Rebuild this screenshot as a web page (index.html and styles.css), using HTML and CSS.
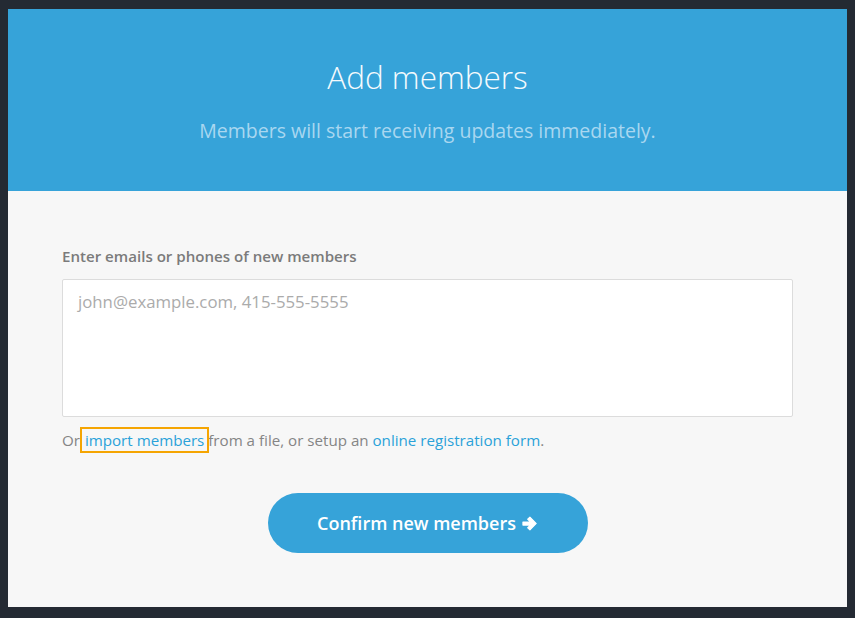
FILE: index.html
```html
<!DOCTYPE html>
<html lang="en">
<head>
<meta charset="utf-8">
<title>Add members</title>
<link rel="stylesheet" href="styles.css">
</head>
<body>
<div class="modal">
  <div class="modal-header">
    <h1 class="title">Add members</h1>
    <p class="subtitle">Members will start receiving updates immediately.</p>
  </div>
  <div class="modal-body">
    <label class="label" for="members">Enter emails or phones of new members</label>
    <textarea id="members" class="input" placeholder="john@example.com, 415-555-5555"></textarea>
    <p class="help">Or <a class="link highlighted" href="#">import members</a> from a file, or setup an <a class="link" href="#">online registration form</a>.</p>
    <div class="actions">
      <button class="confirm" type="button">Confirm new members
        <svg class="arrow" viewBox="0 0 16 16" width="17" height="17" aria-hidden="true"><path d="M8.4 1.9 L14.4 8 L8.4 14.1 L6.3 12 L8.9 9.5 H1.8 V6.5 H8.9 L6.3 4 Z" fill="#fff" stroke="#fff" stroke-width="1" stroke-linejoin="round"/></svg>
      </button>
    </div>
  </div>
</div>
</body>
</html>
```

FILE: styles.css
```css
* { box-sizing: border-box; }
html, body { margin: 0; padding: 0; }
body {
  background: #242a33;
  font-family: "Open Sans", "Noto Sans", sans-serif;
  width: 855px;
  height: 618px;
  overflow: hidden;
}
.modal {
  margin: 9px 8px 0 8px;
  width: 839px;
  height: 598px;
  background: #f7f7f7;
  display: flex;
  flex-direction: column;
}
.modal-header {
  height: 182px;
  background: #36a3d9;
  text-align: center;
  padding-top: 49px;
}
.title {
  margin: 0;
  font-size: 31.5px;
  line-height: 38px;
  font-weight: 300;
  color: #f4fafd;
}
.subtitle {
  margin: 22px 0 0 0;
  font-size: 19.5px;
  line-height: 26px;
  font-weight: 400;
  color: #a9d7f0;
}
.modal-body {
  padding: 55px 54px 0 54px;
  display: flex;
  flex-direction: column;
}
.label {
  font-size: 15.1px;
  line-height: 20px;
  font-weight: 600;
  color: #7b7b7b;
}
.input {
  margin-top: 13px;
  width: 731px;
  height: 138px;
  border: 1px solid #dcdcdc;
  border-radius: 2px;
  background: #fff;
  resize: none;
  padding: 10px 15px;
  font-family: "Open Sans", "Noto Sans", sans-serif;
  font-size: 16.8px;
  line-height: 24px;
  color: #555;
  outline: none;
}
.input::placeholder { color: #ababab; }
.help {
  margin: 13px 0 0 0;
  font-size: 15.15px;
  line-height: 20px;
  color: #858585;
}
.link {
  color: #2aa2d9;
  text-decoration: none;
}
.highlighted {
  padding: 0 2px;
  margin: 0 -2px 0 -1px;
  outline: 2px solid #f5a502;
  outline-offset: 1px;
}
.actions {
  margin-top: 43px;
  display: flex;
  justify-content: center;
}
.confirm {
  width: 320px;
  height: 60px;
  border: none;
  border-radius: 30px;
  background: #36a3d9;
  color: #fff;
  font-family: "Open Sans", "Noto Sans", sans-serif;
  font-size: 18px;
  font-weight: 600;
  display: flex;
  align-items: center;
  justify-content: center;
  gap: 5px;
  cursor: pointer;
  padding: 0;
}
.arrow { display: block; margin-top: 1px; }
```
